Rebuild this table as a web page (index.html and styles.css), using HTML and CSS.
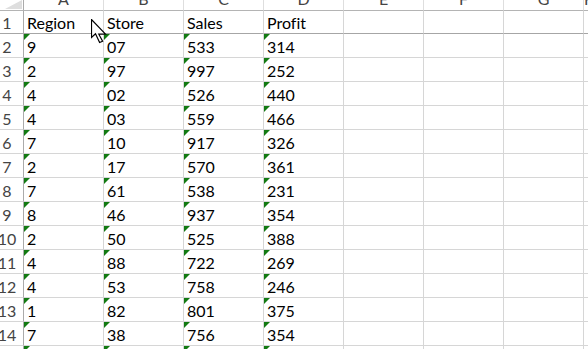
FILE: index.html
```html
<!DOCTYPE html>
<html>
<head>
<meta charset="utf-8">
<link rel="stylesheet" href="styles.css">
</head>
<body>
<div class="sheet">
  <div class="row hdr">
    <div class="rh corner"></div>
    <div class="cell ch">A</div><div class="cell ch">B</div><div class="cell ch">C</div><div class="cell ch">D</div><div class="cell ch">E</div><div class="cell ch">F</div><div class="cell ch">G</div><div class="cell ch rest">H</div>
  </div>
  <div class="row r1">
    <div class="rh"><span>1</span></div>
    <div class="cell">Region</div><div class="cell">Store</div><div class="cell">Sales</div><div class="cell">Profit</div><div class="cell"></div><div class="cell"></div><div class="cell"></div><div class="cell rest"></div>
  </div>
  <div class="row">
    <div class="rh"><span>2</span></div>
    <div class="cell t">9</div><div class="cell t">07</div><div class="cell t">533</div><div class="cell t">314</div><div class="cell"></div><div class="cell"></div><div class="cell"></div><div class="cell rest"></div>
  </div>
  <div class="row">
    <div class="rh"><span>3</span></div>
    <div class="cell t">2</div><div class="cell t">97</div><div class="cell t">997</div><div class="cell t">252</div><div class="cell"></div><div class="cell"></div><div class="cell"></div><div class="cell rest"></div>
  </div>
  <div class="row">
    <div class="rh"><span>4</span></div>
    <div class="cell t">4</div><div class="cell t">02</div><div class="cell t">526</div><div class="cell t">440</div><div class="cell"></div><div class="cell"></div><div class="cell"></div><div class="cell rest"></div>
  </div>
  <div class="row">
    <div class="rh"><span>5</span></div>
    <div class="cell t">4</div><div class="cell t">03</div><div class="cell t">559</div><div class="cell t">466</div><div class="cell"></div><div class="cell"></div><div class="cell"></div><div class="cell rest"></div>
  </div>
  <div class="row">
    <div class="rh"><span>6</span></div>
    <div class="cell t">7</div><div class="cell t">10</div><div class="cell t">917</div><div class="cell t">326</div><div class="cell"></div><div class="cell"></div><div class="cell"></div><div class="cell rest"></div>
  </div>
  <div class="row">
    <div class="rh"><span>7</span></div>
    <div class="cell t">2</div><div class="cell t">17</div><div class="cell t">570</div><div class="cell t">361</div><div class="cell"></div><div class="cell"></div><div class="cell"></div><div class="cell rest"></div>
  </div>
  <div class="row">
    <div class="rh"><span>8</span></div>
    <div class="cell t">7</div><div class="cell t">61</div><div class="cell t">538</div><div class="cell t">231</div><div class="cell"></div><div class="cell"></div><div class="cell"></div><div class="cell rest"></div>
  </div>
  <div class="row">
    <div class="rh"><span>9</span></div>
    <div class="cell t">8</div><div class="cell t">46</div><div class="cell t">937</div><div class="cell t">354</div><div class="cell"></div><div class="cell"></div><div class="cell"></div><div class="cell rest"></div>
  </div>
  <div class="row">
    <div class="rh"><span>10</span></div>
    <div class="cell t">2</div><div class="cell t">50</div><div class="cell t">525</div><div class="cell t">388</div><div class="cell"></div><div class="cell"></div><div class="cell"></div><div class="cell rest"></div>
  </div>
  <div class="row">
    <div class="rh"><span>11</span></div>
    <div class="cell t">4</div><div class="cell t">88</div><div class="cell t">722</div><div class="cell t">269</div><div class="cell"></div><div class="cell"></div><div class="cell"></div><div class="cell rest"></div>
  </div>
  <div class="row">
    <div class="rh"><span>12</span></div>
    <div class="cell t">4</div><div class="cell t">53</div><div class="cell t">758</div><div class="cell t">246</div><div class="cell"></div><div class="cell"></div><div class="cell"></div><div class="cell rest"></div>
  </div>
  <div class="row">
    <div class="rh"><span>13</span></div>
    <div class="cell t">1</div><div class="cell t">82</div><div class="cell t">801</div><div class="cell t">375</div><div class="cell"></div><div class="cell"></div><div class="cell"></div><div class="cell rest"></div>
  </div>
  <div class="row">
    <div class="rh"><span>14</span></div>
    <div class="cell t">7</div><div class="cell t">38</div><div class="cell t">756</div><div class="cell t">354</div><div class="cell"></div><div class="cell"></div><div class="cell"></div><div class="cell rest"></div>
  </div>
  <div class="row">
    <div class="rh"><span>15</span></div>
    <div class="cell t"></div><div class="cell t"></div><div class="cell t"></div><div class="cell t"></div><div class="cell"></div><div class="cell"></div><div class="cell"></div><div class="cell rest"></div>
  </div>
</div>
<svg class="cursor" width="17" height="25" viewBox="0 0 17 25">
  <polygon points="0.5,0.5 0.5,18.5 4.5,14.8 8.6,23.5 11.6,22.2 7.8,15.2 14.5,15.2" fill="#fff" stroke="#000" stroke-width="1.2" stroke-linejoin="miter"/>
</svg>
</body>
</html>
```

FILE: styles.css
```css
html, body {
  margin: 0;
  padding: 0;
  background: #fff;
}
body {
  width: 588px;
  height: 349px;
  overflow: hidden;
  position: relative;
  font-family: Lato, "Open Sans", "Liberation Sans", sans-serif;
  font-size: 16px;
  font-variant-ligatures: none;
  color: #000;
}
.sheet {
  display: flex;
  flex-direction: column;
}
.row {
  display: flex;
  height: 24px;
  flex: none;
}
.row.hdr {
  height: 11px;
}
.row.r1 {
  height: 23px;
}
.rh, .cell {
  box-sizing: border-box;
  height: 100%;
  border-bottom: 1px solid #d6d6d6;
  border-right: 1px solid #d6d6d6;
  display: flex;
  align-items: flex-end;
  line-height: 15px;
  flex: none;
}
.rh {
  width: 24px;
  padding-right: 9px;
  padding-bottom: 3px;
  justify-content: center;
  color: #444;
  border-right-color: #ababab;
  overflow: visible;
}
.rh span {
  white-space: nowrap;
}
.cell {
  width: 80px;
  padding-left: 3px;
  padding-bottom: 3px;
  position: relative;
  white-space: nowrap;
}
.cell.rest {
  flex: 1;
  width: auto;
  border-right: none;
}
.hdr .rh, .hdr .cell {
  border-bottom-color: #b4b4b4;
}
.ch {
  justify-content: center;
  padding-left: 0;
  padding-bottom: 4px;
  color: #444;
  border-right-color: #dedede;
}
.corner {
  position: relative;
}
.corner::after {
  content: "";
  position: absolute;
  left: 5px;
  top: 0;
  width: 17px;
  height: 9px;
  background: #dedede;
  clip-path: polygon(100% 0, 100% 100%, 0 100%);
}
.r1 .rh, .r1 .cell {
  border-bottom-color: #a6a6a6;
}
.cell.t::before {
  content: "";
  position: absolute;
  left: 0;
  top: 0;
  width: 6px;
  height: 6px;
  background: #127a12;
  clip-path: polygon(0 0, 100% 0, 0 100%);
}
.cursor {
  position: absolute;
  left: 91px;
  top: 19px;
}
```
